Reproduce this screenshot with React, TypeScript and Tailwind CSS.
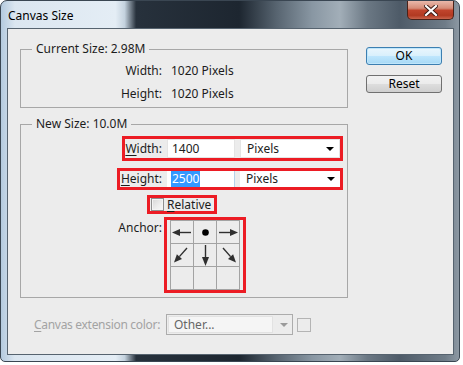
const font = { fontFamily: '"Noto Sans", "Liberation Sans", sans-serif' };

function Arrow({ kind }: { kind: string }) {
  const c = "#2f2f2f";
  return (
    <svg width="22" height="22" viewBox="0 0 22 22">
      {kind === "left" && (
        <g>
          <line x1="20" y1="11.5" x2="8" y2="11.5" stroke={c} strokeWidth="1.4" />
          <polygon points="1,11.5 9,8 9,15" fill={c} />
        </g>
      )}
      {kind === "dot" && <circle cx="11.5" cy="11.5" r="3.3" fill="#000" />}
      {kind === "right" && (
        <g>
          <line x1="2" y1="11.5" x2="14" y2="11.5" stroke={c} strokeWidth="1.4" />
          <polygon points="21,11.5 13,8 13,15" fill={c} />
        </g>
      )}
      {kind === "downleft" && (
        <g>
          <line x1="16" y1="4" x2="8.4" y2="12.6" stroke={c} strokeWidth="1.4" />
          <polygon points="3,18.5 11,15 5.9,10.2" fill={c} />
        </g>
      )}
      {kind === "down" && (
        <g>
          <line x1="11.5" y1="1" x2="11.5" y2="14" stroke={c} strokeWidth="1.4" />
          <polygon points="11.5,22 8,13 15,13" fill={c} />
        </g>
      )}
      {kind === "downright" && (
        <g>
          <line x1="6" y1="4" x2="13.6" y2="12.6" stroke={c} strokeWidth="1.4" />
          <polygon points="19,18.5 11,15 16.1,10.2" fill={c} />
        </g>
      )}
    </svg>
  );
}

function Caret() {
  return <span className="ml-auto mr-[5px] h-0 w-0 border-x-[4px] border-t-[4px] border-x-transparent border-t-black" />;
}

const anchors = ["left", "dot", "right", "downleft", "down", "downright", "", "", ""];

export default function App() {
  return (
    <div className="h-[365px] w-[463px] bg-white text-[12px] leading-[16px] text-[#1c1c1c]" style={font}>
      <div className="flex h-[362px] w-[460px] flex-col rounded-t-[7px] rounded-b-[5px] border border-[#3a4652] bg-[linear-gradient(90deg,#b4cade_0%,#dbe6f0_3%,#e4edf5_25%,#c4d2de_27%,#27313c_29.5%,#1d2630_52%,#56636f_60%,#8997a3_68%,#a2aeb8_74%,#6b7884_80%,#4e5b68_87%,#6f7c88_97%,#8c98a3_100%)] pb-[6px]">
        <div className="flex h-[27px] items-start">
          <span className="ml-[7px] mt-[7px] text-[12px] text-black">Canvas Size</span>
          <div className="ml-auto mr-[5px] flex h-[19px] w-[47px] items-center justify-center rounded-b-[5px] border border-t-0 border-[#4a2219] bg-[linear-gradient(180deg,#e9b8aa_0%,#d58c78_40%,#c0442c_52%,#b23a22_80%,#c9644c_100%)]">
            <svg width="14" height="11" viewBox="0 0 14 11">
              <path d="M2 1 L12 10 M12 1 L2 10" stroke="#3b1a14" strokeWidth="4" strokeLinecap="square" />
              <path d="M2 1 L12 10 M12 1 L2 10" stroke="#ffffff" strokeWidth="2.2" strokeLinecap="square" />
            </svg>
          </div>
        </div>

        <div className="ml-[6px] mr-[5px] flex flex-1 border border-[#56636f] bg-[#ececec]">
          <div className="flex flex-col pl-[12px] pt-[12px]">
            <fieldset className="w-[328px] border border-[#a7a7a7] pb-[2px]">
              <legend className="ml-[11px] px-[4px]">Current Size: 2.98M</legend>
              <div className="grid grid-cols-[141px_auto] gap-x-[9px] pt-[2px]">
                <span className="flex h-[23px] items-center justify-end">Width:</span>
                <span className="flex h-[23px] items-center">1020 Pixels</span>
                <span className="flex h-[23px] items-center justify-end">Height:</span>
                <span className="flex h-[23px] items-center">1020 Pixels</span>
              </div>
            </fieldset>

            <fieldset className="mt-[8px] w-[328px] border border-[#a7a7a7] pb-[4px]">
              <legend className="ml-[11px] px-[4px]">New Size: 10.0M</legend>
              <div className="flex flex-col items-start">
                <div className="ml-[101px] mt-[4px] flex h-[25px] items-center border-[3px] border-[#ec1c24]">
                  <span className="w-[37px] text-right">
                    <u className="underline-offset-2">W</u>idth:
                  </span>
                  <span className="ml-[5px] flex h-[19px] w-[68px] items-center border border-[#e4e4e4] bg-white pl-[4px]">1400</span>
                  <span className="ml-[5px] flex h-[19px] w-[100px] items-center border border-[#e4e4e4] bg-white pl-[6px]">
                    Pixels
                    <Caret />
                  </span>
                </div>
                <div className="ml-[96px] mt-[7px] flex h-[22px] items-center border-[3px] border-[#ec1c24]">
                  <span className="w-[42px] text-right">
                    <u className="underline-offset-2">H</u>eight:
                  </span>
                  <span className="ml-[5px] flex h-[16px] w-[68px] items-center border-r border-[#b5d2ea] bg-white pl-[4px]">
                    <span className="bg-[#3399ff] px-[1px] text-white">2500</span>
                  </span>
                  <span className="ml-[5px] flex h-[16px] w-[100px] items-center bg-white pl-[6px]">
                    Pixels
                    <Caret />
                  </span>
                </div>
                <div className="ml-[126px] mt-[5px] flex h-[19px] items-center border-[3px] border-[#ec1c24] pr-[3px]">
                  <span className="ml-[1px] h-[13px] w-[13px] border border-[#8e8f8f] bg-[linear-gradient(135deg,#d6d6d6_0%,#eeeeee_60%,#f8f8f8_100%)] shadow-[inset_0_0_0_1px_#f4f4f4]" />
                  <span className="ml-[3px]">
                    <u className="underline-offset-2">R</u>elative
                  </span>
                </div>
                <div className="mt-[3px] flex items-start">
                  <span className="mt-[3px] w-[141px] text-right">Anchor:</span>
                  <div className="ml-[2px] border-[3px] border-[#ec1c24] px-[3px]">
                    <div className="grid grid-cols-3 border-l border-t border-[#a3a3a3]">
                      {anchors.map((a, i) => (
                        <div key={i} className="h-[23px] w-[23px] border-b border-r border-[#a3a3a3]">
                          {a && <Arrow kind={a} />}
                        </div>
                      ))}
                    </div>
                  </div>
                </div>
              </div>
            </fieldset>

            <div className="mt-[16px] flex items-center">
              <span className="ml-[14px] w-[132px] whitespace-nowrap tracking-[-0.3px] text-[#a3a3a3]">
                <u className="underline-offset-2">C</u>anvas extension color:
              </span>
              <div className="flex h-[21px] w-[127px] items-center border border-[#acacac] bg-[#ececec] p-[1px]">
                <span className="flex h-full w-[105px] items-center border border-[#e2e2e2] bg-[#f5f5f5] pl-[5px] text-[#666]">Other...</span>
                <span className="ml-[7px] h-0 w-0 border-x-[4px] border-t-[4px] border-x-transparent border-t-[#9a9a9a]" />
              </div>
              <span className="ml-[4px] h-[14px] w-[14px] border border-[#b4b4b4]" />
            </div>
          </div>

          <div className="ml-[18px] flex flex-col gap-[10px] pt-[18px]">
            <button className="h-[18px] w-[76px] rounded-[3px] border border-[#3c7fb1] bg-[linear-gradient(180deg,#eaf6fd_0%,#d9f0fc_48%,#bee6fd_52%,#a7d9f5_100%)] shadow-[inset_0_0_0_1px_#bfe6fb] text-[12px] leading-[16px] text-black">
              OK
            </button>
            <button className="h-[18px] w-[76px] rounded-[3px] border border-[#707070] bg-[linear-gradient(180deg,#f2f2f2_0%,#ebebeb_48%,#dddddd_52%,#cfcfcf_100%)] text-[12px] leading-[16px] text-black">
              Reset
            </button>
          </div>
        </div>
      </div>
    </div>
  );
}
